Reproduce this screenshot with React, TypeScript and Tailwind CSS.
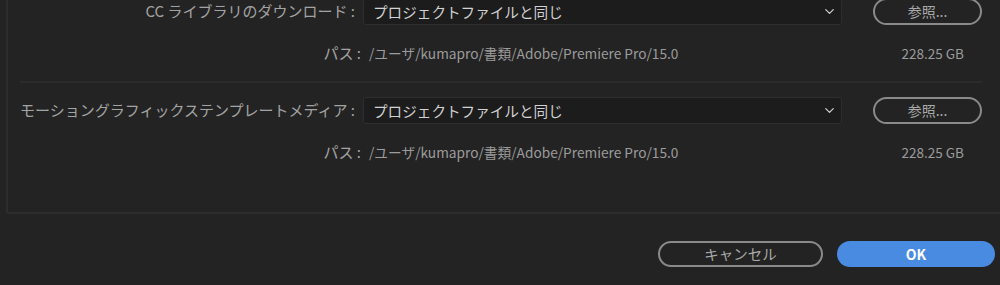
import { ChevronDown } from 'lucide-react';

const font = { fontFamily: '"Noto Sans CJK JP", "Noto Sans", sans-serif' };

const rows = [
  { label: 'CC ライブラリのダウンロード :', value: 'プロジェクトファイルと同じ' },
  { label: 'モーショングラフィックステンプレートメディア :', value: 'プロジェクトファイルと同じ' },
];

const path = '/ユーザ/kumapro/書類/Adobe/Premiere Pro/15.0';

function LocationRow({ label, value }: { label: string; value: string }) {
  return (
    <div className="flex flex-col">
      <div className="flex h-[27px] items-center">
        <div className="w-[343px] shrink-0 whitespace-nowrap pr-[8px] text-right text-[15px] text-[#a3a3a3]">{label}</div>
        <div className="flex h-[27px] w-[479px] shrink-0 items-center justify-between rounded-[3px] border border-[#2e2e2e] bg-[#1c1c1c] pl-[9px] pr-[4px]">
          <span className="text-[14.6px] text-[#d2d2d2]">{value}</span>
          <ChevronDown className="h-[15px] w-[15px] text-[#cfcfcf]" strokeWidth={2} />
        </div>
        <button className="ml-[31px] flex h-[27px] w-[109px] shrink-0 items-center justify-center rounded-full border-2 border-[#8a8a8a] text-[14px] text-[#a9a9a9]">
          参照...
        </button>
      </div>
      <div className="mt-[18px] flex h-[20px] items-center">
        <div className="w-[349px] shrink-0 pr-[8px] text-right text-[15px] text-[#a3a3a3]">パス :</div>
        <div className="w-[473px] shrink-0 whitespace-nowrap text-[13.7px] text-[#9c9c9c]">{path}</div>
        <div className="w-[141px] shrink-0 whitespace-nowrap pr-[19px] text-right text-[13.5px] text-[#9c9c9c]">228.25 GB</div>
      </div>
    </div>
  );
}

export default function App() {
  return (
    <div className="h-[285px] w-[1000px] overflow-hidden bg-[#232323]" style={font}>
      <div className="-mr-[20px] -mt-[2px] ml-[6px] flex flex-col rounded-b-[3px] border-b-2 border-l-2 border-[#2d2d2d] pb-[50px] pl-[12px]">
        <LocationRow {...rows[0]} />
        <div className="mt-[18px] h-[2px] w-[962px] bg-[#2b2b2b]" />
        <div className="mt-[14px]">
          <LocationRow {...rows[1]} />
        </div>
      </div>
      <div className="mt-[27px] flex justify-end gap-[14px] pr-[5px]">
        <button className="flex h-[26px] w-[165px] items-center justify-center rounded-full border-2 border-[#8a8a8a] text-[14.5px] text-[#a9a9a9]">
          キャンセル
        </button>
        <button className="flex h-[26px] w-[158px] items-center justify-center rounded-full bg-[#4a8be2] text-[14px] font-semibold text-white">
          OK
        </button>
      </div>
    </div>
  );
}
